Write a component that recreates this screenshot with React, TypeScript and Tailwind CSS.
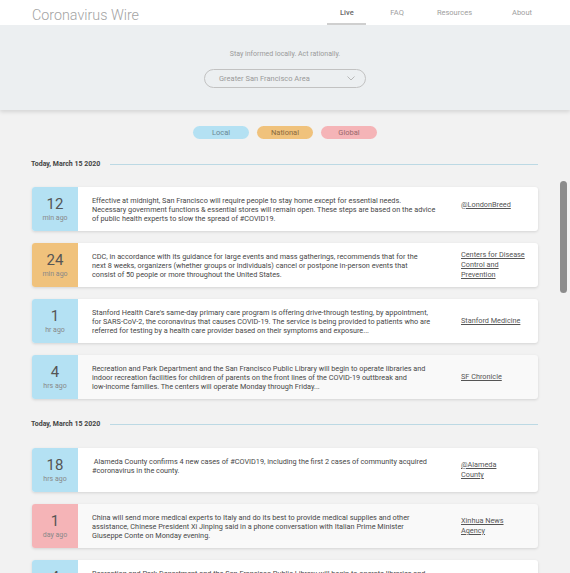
import React from "react";

type Card = {
  n: string;
  label: string;
  color: string;
  lines: string[];
  source: string[];
  gray?: boolean;
  lift?: boolean;
};

const section1: Card[] = [
  {
    n: "12",
    label: "min ago",
    color: "bg-[#b4e1f3]",
    lines: [
      "Effective at midnight, San Francisco will require people to stay home except for essential needs.",
      "Necessary government functions & essential stores will remain open. These steps are based on the advice",
      "of public health experts to slow the spread of #COVID19.",
    ],
    source: ["@LondonBreed"],
    lift: true,
  },
  {
    n: "24",
    label: "min ago",
    color: "bg-[#f0c27c]",
    lines: [
      "CDC, in accordance with its guidance for large events and mass gatherings, recommends that for the",
      "next 8 weeks, organizers (whether groups or individuals) cancel or postpone in-person events that",
      "consist of 50 people or more throughout the United States.",
    ],
    source: ["Centers for Disease", "Control and", "Prevention"],
  },
  {
    n: "1",
    label: "hr ago",
    color: "bg-[#b4e1f3]",
    lines: [
      "Stanford Health Care's same-day primary care program is offering drive-through testing, by appointment,",
      "for SARS-CoV-2, the coronavirus that causes COVID-19. The service is being provided to patients who are",
      "referred for testing by a health care provider based on their symptoms and exposure...",
    ],
    source: ["Stanford Medicine"],
  },
  {
    n: "4",
    label: "hrs ago",
    color: "bg-[#b4e1f3]",
    lines: [
      "Recreation and Park Department and the San Francisco Public Library will begin to operate libraries and",
      "indoor recreation facilities for children of parents on the front lines of the COVID-19 outtbreak and",
      "low-income families. The centers will operate Monday through Friday...",
    ],
    source: ["SF Chronicle"],
    gray: true,
  },
];

const section2: Card[] = [
  {
    n: "18",
    label: "hrs ago",
    color: "bg-[#b4e1f3]",
    lines: [
      "\u00a0Alameda County confirms 4 new cases of #COVID19, including the first 2 cases of community acquired",
      "#coronavirus in the county.",
    ],
    source: ["@Alameda", "County"],
  },
  {
    n: "1",
    label: "day ago",
    color: "bg-[#f5b4b7]",
    lines: [
      "China will send more medical experts to Italy and do its best to provide medical supplies and other",
      "assistance, Chinese President Xi Jinping said in a phone conversation with Italian Prime Minister",
      "Giuseppe Conte on Monday evening.",
    ],
    source: ["Xinhua News", "Agency"],
    gray: true,
  },
  {
    n: "4",
    label: "hrs ago",
    color: "bg-[#b4e1f3]",
    lines: [
      "Recreation and Park Department and the San Francisco Public Library will begin to operate libraries and",
      "indoor recreation facilities for children of parents on the front lines of the COVID-19 outtbreak and",
      "low-income families. The centers will operate Monday through Friday...",
    ],
    source: ["SF Chronicle"],
  },
];

function NewsCard({ c }: { c: Card }) {
  return (
    <div
      className={`flex h-[44px] shrink-0 rounded-[3px] shadow-[0_1px_3px_rgba(0,0,0,0.13)] ${
        c.gray ? "bg-[#f9f9f9]" : "bg-white"
      }`}
    >
      <div
        className={`flex w-[46px] shrink-0 flex-col items-center justify-center rounded-l-[3px] ${c.color}`}
      >
        <div className="text-[15px] leading-[16px] text-[#555]">{c.n}</div>
        <div className="mt-[2px] text-[7px] leading-[9px] text-[#888]">{c.label}</div>
      </div>
      <div className="w-[369px] shrink-0 pl-[14px] pt-[9px] text-[7.3px] leading-[9px] text-[#474747]">
        {c.lines.map((l, i) => (
          <div key={i} className="whitespace-nowrap">
            {l}
          </div>
        ))}
      </div>
      <div
        className={`ml-[14px] flex flex-col justify-center text-[7.3px] leading-[10px] text-[#555] ${
          c.lift ? "pb-[9px]" : ""
        }`}
      >
        {c.source.map((s, i) => (
          <div key={i} className="whitespace-nowrap underline underline-offset-[1px]">
            {s}
          </div>
        ))}
      </div>
    </div>
  );
}

function DateRow({ className }: { className: string }) {
  return (
    <div className={`flex h-[10px] items-center gap-[10px] ${className}`}>
      <div className="-ml-[1px] whitespace-nowrap text-[7px] font-bold leading-[10px] text-[#444]">
        Today, March 15 2020
      </div>
      <div className="h-px flex-1 bg-[#bcd9e4]" />
    </div>
  );
}

export default function App() {
  return (
    <div
      className="relative h-[573px] w-full overflow-hidden bg-[#f2f2f2]"
      style={{ fontFamily: "Roboto, 'Noto Sans', sans-serif" }}
    >
      {/* Header */}
      <header className="relative z-20 flex h-[25px] bg-white">
        <div className="ml-[32px] mt-[8px] text-[14.3px] font-light leading-[15px] text-[#a3a3a3]">
          Coronavirus Wire
        </div>
        <nav className="ml-auto mr-[38px] flex h-[25px] items-center text-[7.5px]">
          <div className="flex h-[25px] w-[39px] items-center justify-center border-b-2 border-[#cfcfcf] pt-[2px] font-medium text-[#666]">
            Live
          </div>
          <div className="ml-[24px] text-[#9e9e9e]">FAQ</div>
          <div className="ml-[33px] text-[#9e9e9e]">Resources</div>
          <div className="ml-[40px] text-[#9e9e9e]">About</div>
        </nav>
      </header>

      {/* Hero */}
      <section className="relative z-10 flex h-[85px] flex-col items-center bg-[#eceff1] pt-[25px] shadow-[0_2px_4px_rgba(0,0,0,0.12)]">
        <div className="text-[7px] leading-[9px] text-[#9a9a9a]">
          Stay informed locally. Act rationally.
        </div>
        <div className="mt-[10px] flex h-[19px] w-[162px] items-center rounded-full border border-[#c2c2c2] pl-[14px] pr-[10px] text-[7.5px] text-[#9a9a9a]">
          <span>Greater San Francisco Area</span>
          <svg
            className="ml-auto"
            width="8"
            height="5"
            viewBox="0 0 8 5"
            fill="none"
            stroke="#aaaaaa"
            strokeWidth="0.8"
          >
            <path d="M0.5 0.5 L4 4 L7.5 0.5" />
          </svg>
        </div>
      </section>

      {/* Main */}
      <main className="flex flex-col px-[32px]">
        <div className="mt-[16px] flex justify-center gap-[8px] text-[7.5px]">
          <div className="flex h-[13px] w-[56px] items-center justify-center rounded-full bg-[#b4e1f3] text-[#6a8793]">
            Local
          </div>
          <div className="flex h-[13px] w-[56px] items-center justify-center rounded-full bg-[#f0c27c] text-[#8a6a3c]">
            National
          </div>
          <div className="flex h-[13px] w-[56px] items-center justify-center rounded-full bg-[#f5b4b7] text-[#98696c]">
            Global
          </div>
        </div>

        <DateRow className="mt-[20px]" />

        <div className="mt-[18px] flex flex-col gap-[12px]">
          {section1.map((c, i) => (
            <NewsCard key={i} c={c} />
          ))}
        </div>

        <DateRow className="mt-[20px]" />

        <div className="mt-[19px] flex flex-col gap-[12px]">
          {section2.map((c, i) => (
            <NewsCard key={i} c={c} />
          ))}
        </div>
      </main>

      {/* Scrollbar thumb overlay */}
      <div className="absolute left-[560px] top-[181px] h-[112px] w-[7px] rounded-full bg-[#8c8c8c]" />
    </div>
  );
}
